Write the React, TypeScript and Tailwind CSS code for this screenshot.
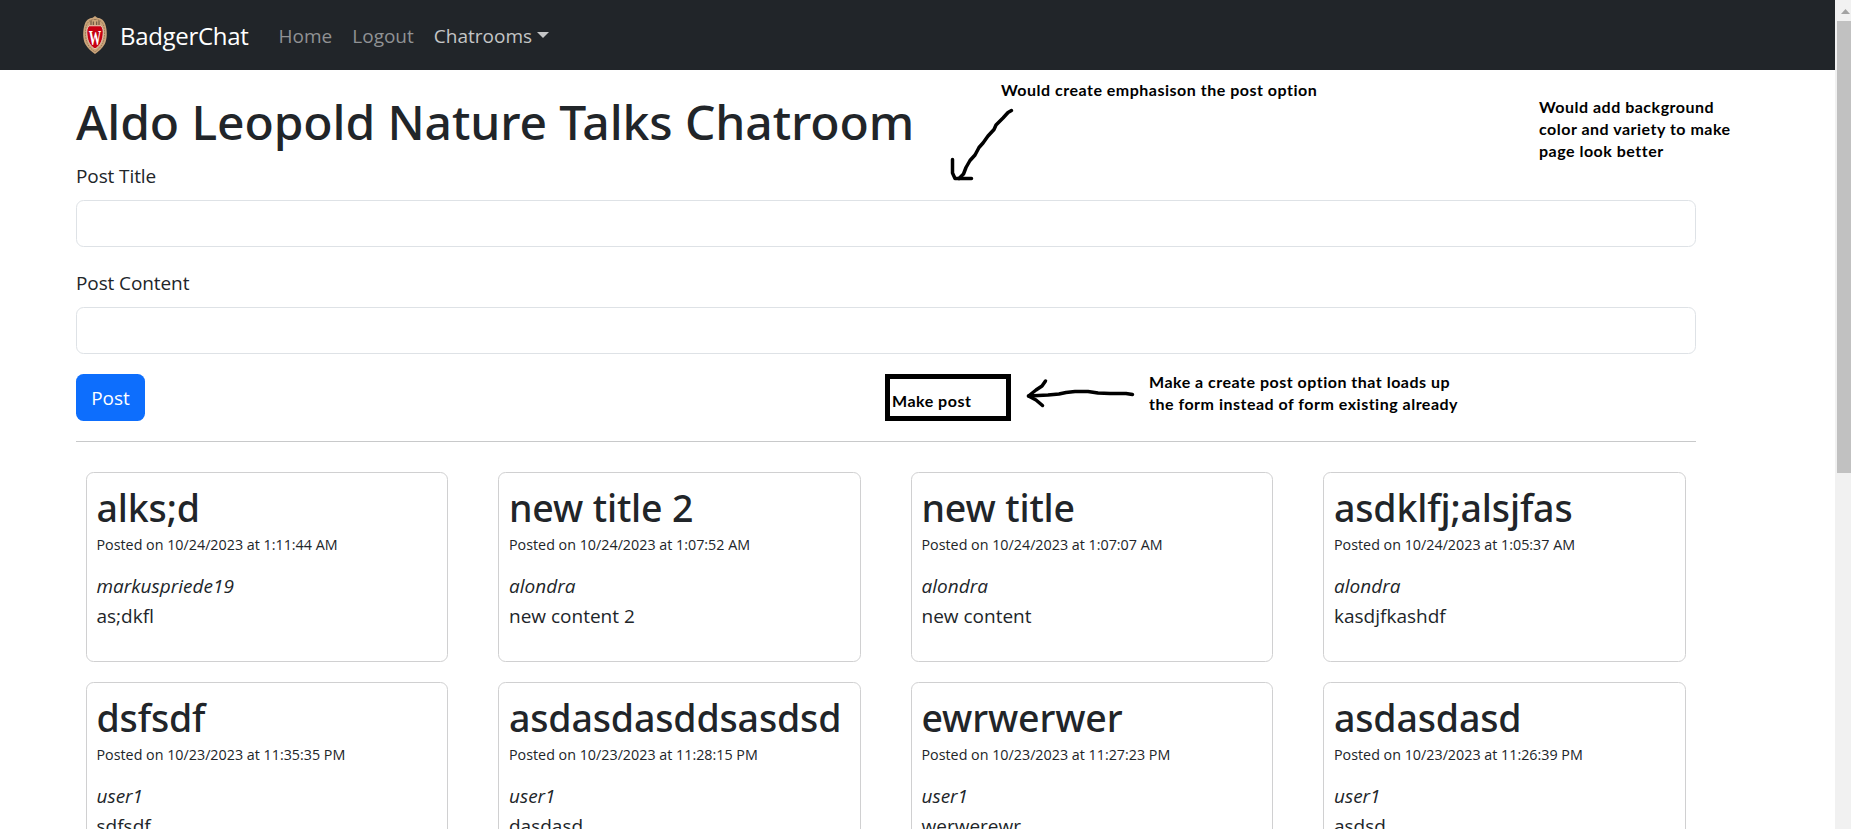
type Post = {
  title: string;
  date: string;
  time: string;
  author: string;
  content: string;
};

const posts: Post[] = [
  { title: "alks;d", date: "10/24/2023", time: "1:11:44 AM", author: "markuspriede19", content: "as;dkfl" },
  { title: "new title 2", date: "10/24/2023", time: "1:07:52 AM", author: "alondra", content: "new content 2" },
  { title: "new title", date: "10/24/2023", time: "1:07:07 AM", author: "alondra", content: "new content" },
  { title: "asdklfj;alsjfas", date: "10/24/2023", time: "1:05:37 AM", author: "alondra", content: "kasdjfkashdf" },
  { title: "dsfsdf", date: "10/23/2023", time: "11:35:35 PM", author: "user1", content: "sdfsdf" },
  { title: "asdasdasddsasdsd", date: "10/23/2023", time: "11:28:15 PM", author: "user1", content: "dasdasd" },
  { title: "ewrwerwer", date: "10/23/2023", time: "11:27:23 PM", author: "user1", content: "werwerewr" },
  { title: "asdasdasd", date: "10/23/2023", time: "11:26:39 PM", author: "user1", content: "asdsd" },
];

function Crest() {
  return (
    <svg width="38" height="38" viewBox="0 0 38 38" className="shrink-0">
      <path
        d="M19 0 L21.3 1.8 C25 2 28 4.5 29.2 8 C31.4 14 31.4 23 28.8 28 C26.5 32.5 22.5 35.5 19 38 C15.5 35.5 11.5 32.5 9.2 28 C6.6 23 6.6 14 8.8 8 C10 4.5 13 2 16.7 1.8 Z"
        fill="#c9a47a"
      />
      <path
        d="M19 3.5 C24 3.5 27 6 28 11 C29 17 28.6 23 26.6 27.5 C25 31 22 33.8 19 35.8 C16 33.8 13 31 11.4 27.5 C9.4 23 9 17 10 11 C11 6 14 3.5 19 3.5 Z"
        fill="none"
        stroke="#8d6b4a"
        strokeWidth="0.8"
        strokeDasharray="1.6 1"
      />
      <path d="M15 4.5 V9 M17.3 5.5 V9 M20.7 5.5 V9 M23 4.5 V9" stroke="#5d4a3a" strokeWidth="1" />
      <path
        d="M13 9.8 H25 C27 12 27.6 15 27 19 C26.4 25.5 23.7 30.3 19 32.8 C14.3 30.3 11.6 25.5 11 19 C10.4 15 11 12 13 9.8 Z"
        fill="#c70012"
        stroke="#e9dccb"
        strokeWidth="0.8"
      />
      <text
        x="12.8"
        y="28.5"
        textLength="12.4"
        lengthAdjust="spacingAndGlyphs"
        fill="#fff"
        className="font-['Liberation_Serif',serif] text-[22px] font-bold"
      >
        W
      </text>
    </svg>
  );
}

function Navbar() {
  return (
    <nav className="flex h-[70px] shrink-0 items-center bg-[#212529] pl-[76px] text-[19px] text-[#909294]">
      <Crest />
      <span className="ml-[6px] pt-0.5 text-[24px] tracking-[-0.3px] text-white">BadgerChat</span>
      <span className="ml-[30px] pt-0.5">Home</span>
      <span className="ml-5 pt-0.5">Logout</span>
      <span className="ml-5 flex items-center pt-0.5 text-[#c4c5c6]">
        Chatrooms
        <svg width="12" height="6" viewBox="0 0 12 6" className="-mt-[3px] ml-[5px]">
          <path d="M0 0 H12 L6 6 Z" fill="currentColor" />
        </svg>
      </span>
    </nav>
  );
}

function Field({ label, id }: { label: string; id: string }) {
  return (
    <div className="mb-5 flex flex-col">
      <label htmlFor={id} className="mb-2.5 h-[30px] leading-[32px] tracking-[-0.1px]">
        {label}
      </label>
      <input id={id} className="h-[47px] rounded-[7.5px] border border-[#dee2e6] bg-white px-4 outline-none" />
    </div>
  );
}

function PostCard({ post }: { post: Post }) {
  return (
    <article className="h-[190px] rounded-[7.5px] border border-[#d0d0d1] bg-white px-[10px] pt-[9px]">
      <h2 className="mb-2 h-[48px] font-['Noto_Sans',sans-serif] text-[37.5px] leading-[52px] font-[540] tracking-[-0.15px] whitespace-nowrap">
        {post.title}
      </h2>
      <p className="h-[35px] text-[14.3px] leading-[14px] whitespace-nowrap">
        Posted on {post.date} at {post.time}
      </p>
      <p className="h-[30px] leading-[27px] italic">{post.author}</p>
      <p className="h-[30px] leading-[27px]">{post.content}</p>
    </article>
  );
}

const note =
  "absolute whitespace-pre font-['Lato',sans-serif] text-[16px] leading-[22px] font-bold tracking-[0.5px] text-black [font-variant-ligatures:none]";

function Annotations() {
  return (
    <div className="pointer-events-none absolute inset-0">
      <p className={`${note} top-[79px] left-[1001px]`}>Would create emphasison the post option</p>
      <p className={`${note} top-[96px] left-[1539px]`}>
        {"Would add background\ncolor and variety to make\npage look better"}
      </p>
      <p className={`${note} top-[371px] left-[1149px]`}>
        {"Make a create post option that loads up\nthe form instead of form existing already"}
      </p>
      <div className="absolute top-[374px] left-[885px] h-[47px] w-[126px] border-[5px] border-black" />
      <p className={`${note} top-[390px] left-[892px]`}>Make post</p>
      <svg
        width="1851"
        height="829"
        viewBox="0 0 1851 829"
        fill="none"
        stroke="#000"
        strokeWidth="3.5"
        strokeLinecap="round"
        strokeLinejoin="round"
        className="absolute inset-0"
      >
        <path d="M1011.5 110.5 L1008 112.5 L1003 118 L996 125 L994 129.5 L988 136 L983 143 L979 147.5 L975 155 L970 160.5 L966 167.5 L963.5 174 L959 178.5" />
        <path d="M952.5 159.5 V173 L955 178.5 L971.5 178.5" />
        <path d="M1132.5 394.5 L1126 393.5 H1110 L1098 393 L1088 391.5 H1075 L1066 392.5 L1059 394 L1048 395 L1028.5 396" />
        <path d="M1045.5 381 L1042 386 L1036 390 L1028.5 396 L1036 400 L1042.5 405.5" />
      </svg>
    </div>
  );
}

function Scrollbar() {
  return (
    <div className="flex h-full w-4 shrink-0 flex-col bg-[#f1f1f1] pl-0.5">
      <div className="h-[21px] pt-[9px] pl-1">
        <svg width="9" height="5" viewBox="0 0 9 5" className="block">
          <path d="M4.5 0 L9 5 H0 Z" fill="#a3a3a3" />
        </svg>
      </div>
      <div className="h-[452px] bg-[#c1c1c1]" />
    </div>
  );
}

export default function App() {
  return (
    <div className="relative flex h-[829px] w-[1851px] overflow-hidden bg-white font-['Open_Sans','Noto_Sans',sans-serif] text-[19px] text-[#212529]">
      <div className="flex min-w-0 flex-1 flex-col">
        <Navbar />
        <main className="ml-[76px] w-[1620px] pt-[22px]">
          <h1 className="h-[68px] font-['Noto_Sans',sans-serif] text-[48px] leading-[59px] font-[540] tracking-[-0.1px]">
            Aldo Leopold Nature Talks Chatroom
          </h1>
          <form>
            <Field label="Post Title" id="title" />
            <Field label="Post Content" id="content" />
            <button type="button" className="block h-[47px] w-[69px] rounded-[7.5px] bg-[#0d6efd] pt-0.5 text-white">
              Post
            </button>
          </form>
          <hr className="mt-5 mb-[30px] border-[#c8c9ca]" />
          <section className="-mr-[14.5px] -ml-[15.5px] grid grid-cols-4 gap-y-5">
            {posts.map((post) => (
              <div key={post.title} className="px-[25px]">
                <PostCard post={post} />
              </div>
            ))}
          </section>
        </main>
      </div>
      <Scrollbar />
      <Annotations />
    </div>
  );
}
